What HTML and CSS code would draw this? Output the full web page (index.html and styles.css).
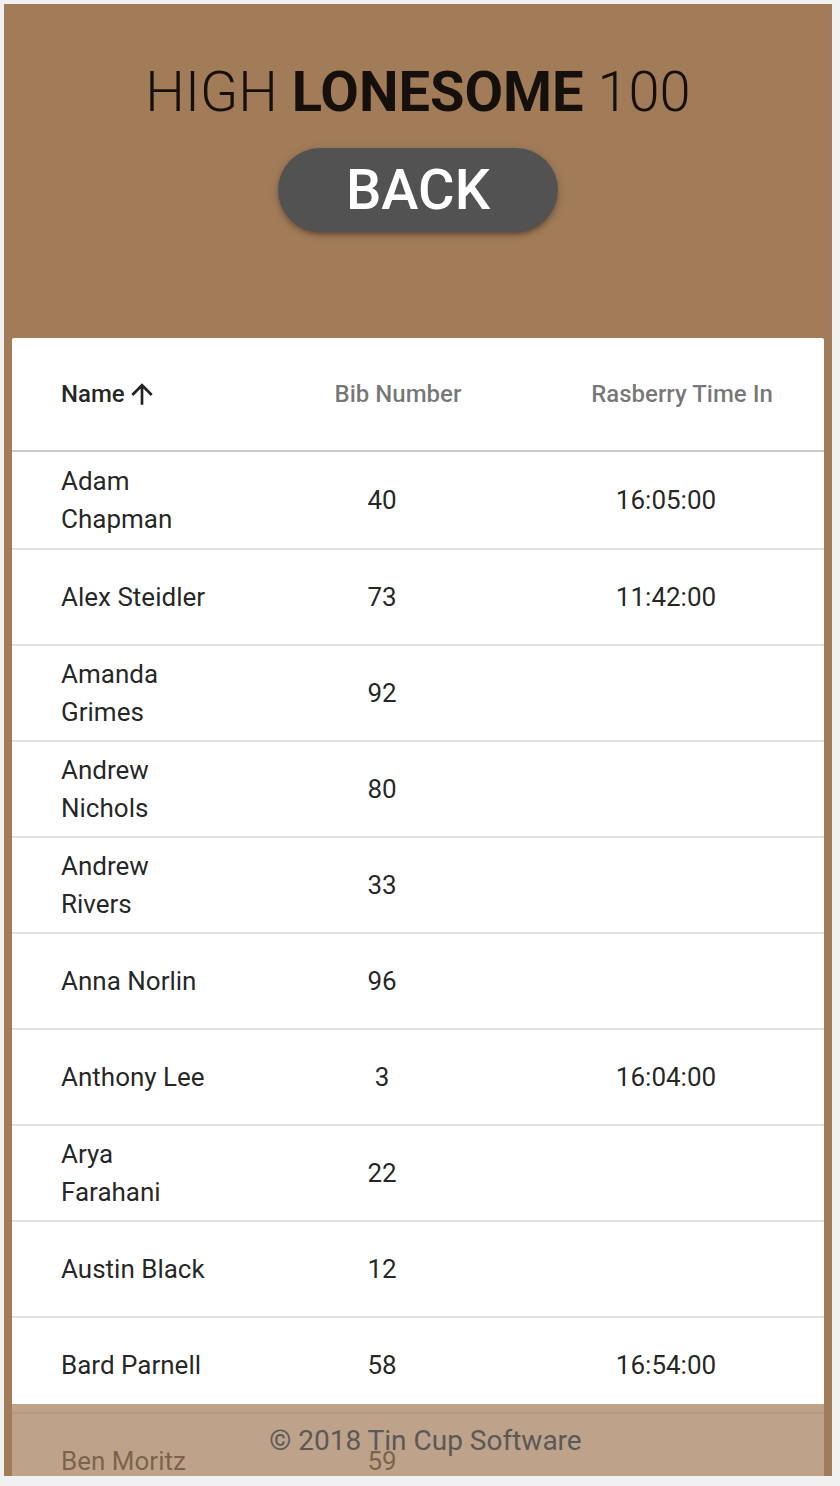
FILE: index.html
```html
<!DOCTYPE html>
<html lang="en">
<head>
<meta charset="utf-8">
<title>High Lonesome 100</title>
<link rel="stylesheet" href="styles.css">
</head>
<body>
<div class="app">
  <header class="hero">
    <h1 class="title"><span class="light">HIGH</span> <b>LONESOME</b> <span class="light">100</span></h1>
    <button class="back">BACK</button>
  </header>
  <section class="card">
    <div class="row head">
      <div class="cell name active">Name<svg class="sort" viewBox="0 0 24 24"><path d="M4 12l1.41 1.41L11 7.83V20h2V7.83l5.58 5.59L20 12l-8-8-8 8z"/></svg></div>
      <div class="cell num">Bib Number</div>
      <div class="cell num">Rasberry Time In</div>
    </div>
    <div class="row first"><div class="cell name"><span>Adam Chapman</span></div><div class="cell num">40</div><div class="cell num">16:05:00</div></div>
    <div class="row"><div class="cell name"><span>Alex Steidler</span></div><div class="cell num">73</div><div class="cell num">11:42:00</div></div>
    <div class="row"><div class="cell name"><span>Amanda Grimes</span></div><div class="cell num">92</div><div class="cell num"></div></div>
    <div class="row"><div class="cell name"><span>Andrew Nichols</span></div><div class="cell num">80</div><div class="cell num"></div></div>
    <div class="row"><div class="cell name"><span>Andrew Rivers</span></div><div class="cell num">33</div><div class="cell num"></div></div>
    <div class="row"><div class="cell name"><span>Anna Norlin</span></div><div class="cell num">96</div><div class="cell num"></div></div>
    <div class="row"><div class="cell name"><span>Anthony Lee</span></div><div class="cell num">3</div><div class="cell num">16:04:00</div></div>
    <div class="row"><div class="cell name"><span>Arya Farahani</span></div><div class="cell num">22</div><div class="cell num"></div></div>
    <div class="row"><div class="cell name"><span>Austin Black</span></div><div class="cell num">12</div><div class="cell num"></div></div>
    <div class="row"><div class="cell name"><span>Bard Parnell</span></div><div class="cell num">58</div><div class="cell num">16:54:00</div></div>
    <div class="row"><div class="cell name"><span>Ben Moritz</span></div><div class="cell num">59</div><div class="cell num"></div></div>
    <div class="row"><div class="cell name"><span>Bethany Ross</span></div><div class="cell num">17</div><div class="cell num"></div></div>
  </section>
  <footer class="footer">© 2018 Tin Cup Software</footer>
</div>
</body>
</html>
```
FILE: styles.css
```css
* { box-sizing: border-box; }
html, body { margin: 0; padding: 0; }
body {
  background: #f1f1f1;
  font-family: Roboto, "Liberation Sans", Arial, sans-serif;
}
.app {
  position: relative;
  margin: 4px 0 0 4px;
  width: 828px;
  height: 1472px;
  background: #a27c59;
  overflow: hidden;
}
.hero {
  height: 334px;
  padding-top: 60px;
  display: flex;
  flex-direction: column;
  align-items: center;
}
.title {
  margin: 0;
  font-size: 56px;
  line-height: 57px;
  font-weight: 400;
  color: rgba(0, 0, 0, 0.87);
  white-space: nowrap;
}
.title .light { font-weight: 300; }
.title b { font-weight: 700; }
.back {
  margin-top: 27px;
  width: 280px;
  height: 84px;
  border: 0;
  border-radius: 42px;
  background: #525252;
  color: #fff;
  font-family: inherit;
  font-size: 56px;
  font-weight: 500;
  line-height: 56px;
  padding: 0;
  display: flex;
  align-items: center;
  justify-content: center;
  box-shadow: 0 2px 10px rgba(0,0,0,0.2), 0 4px 4px rgba(0,0,0,0.14), 0 6px 2px -4px rgba(0,0,0,0.12);
}
.card {
  margin: 0 8px;
  background: #fff;
  border-radius: 2px 2px 0 0;
}
.row {
  display: grid;
  grid-template-columns: 244px 252px 316px;
  height: 96px;
  border-bottom: 2px solid #e0e0e0;
  align-items: center;
  font-size: 26px;
  line-height: 38px;
  color: rgba(0, 0, 0, 0.87);
}
.row.first { height: 98px; }
.row.head {
  height: 114px;
  border-bottom-color: #cacaca;
  font-size: 24px;
  font-weight: 500;
  color: rgba(0, 0, 0, 0.54);
}
.cell.name {
  padding-left: 49px;
  padding-right: 45px;
}
.cell.name span { display: block; max-width: 150px; }
.cell.num { text-align: center; }
.head .cell.num { padding-left: 32px; }
.head .cell.active {
  color: rgba(0, 0, 0, 0.87);
  display: flex;
  align-items: center;
}
.sort {
  width: 32px;
  height: 32px;
  margin-left: 1px;
  fill: rgba(0, 0, 0, 0.87);
}
.footer {
  position: absolute;
  left: 8px;
  right: 8px;
  bottom: 0;
  height: 72px;
  background: rgba(162, 124, 89, 0.7);
  color: #595959;
  font-size: 28px;
  display: flex;
  align-items: center;
  justify-content: center;
  padding-left: 15px;
}
```
